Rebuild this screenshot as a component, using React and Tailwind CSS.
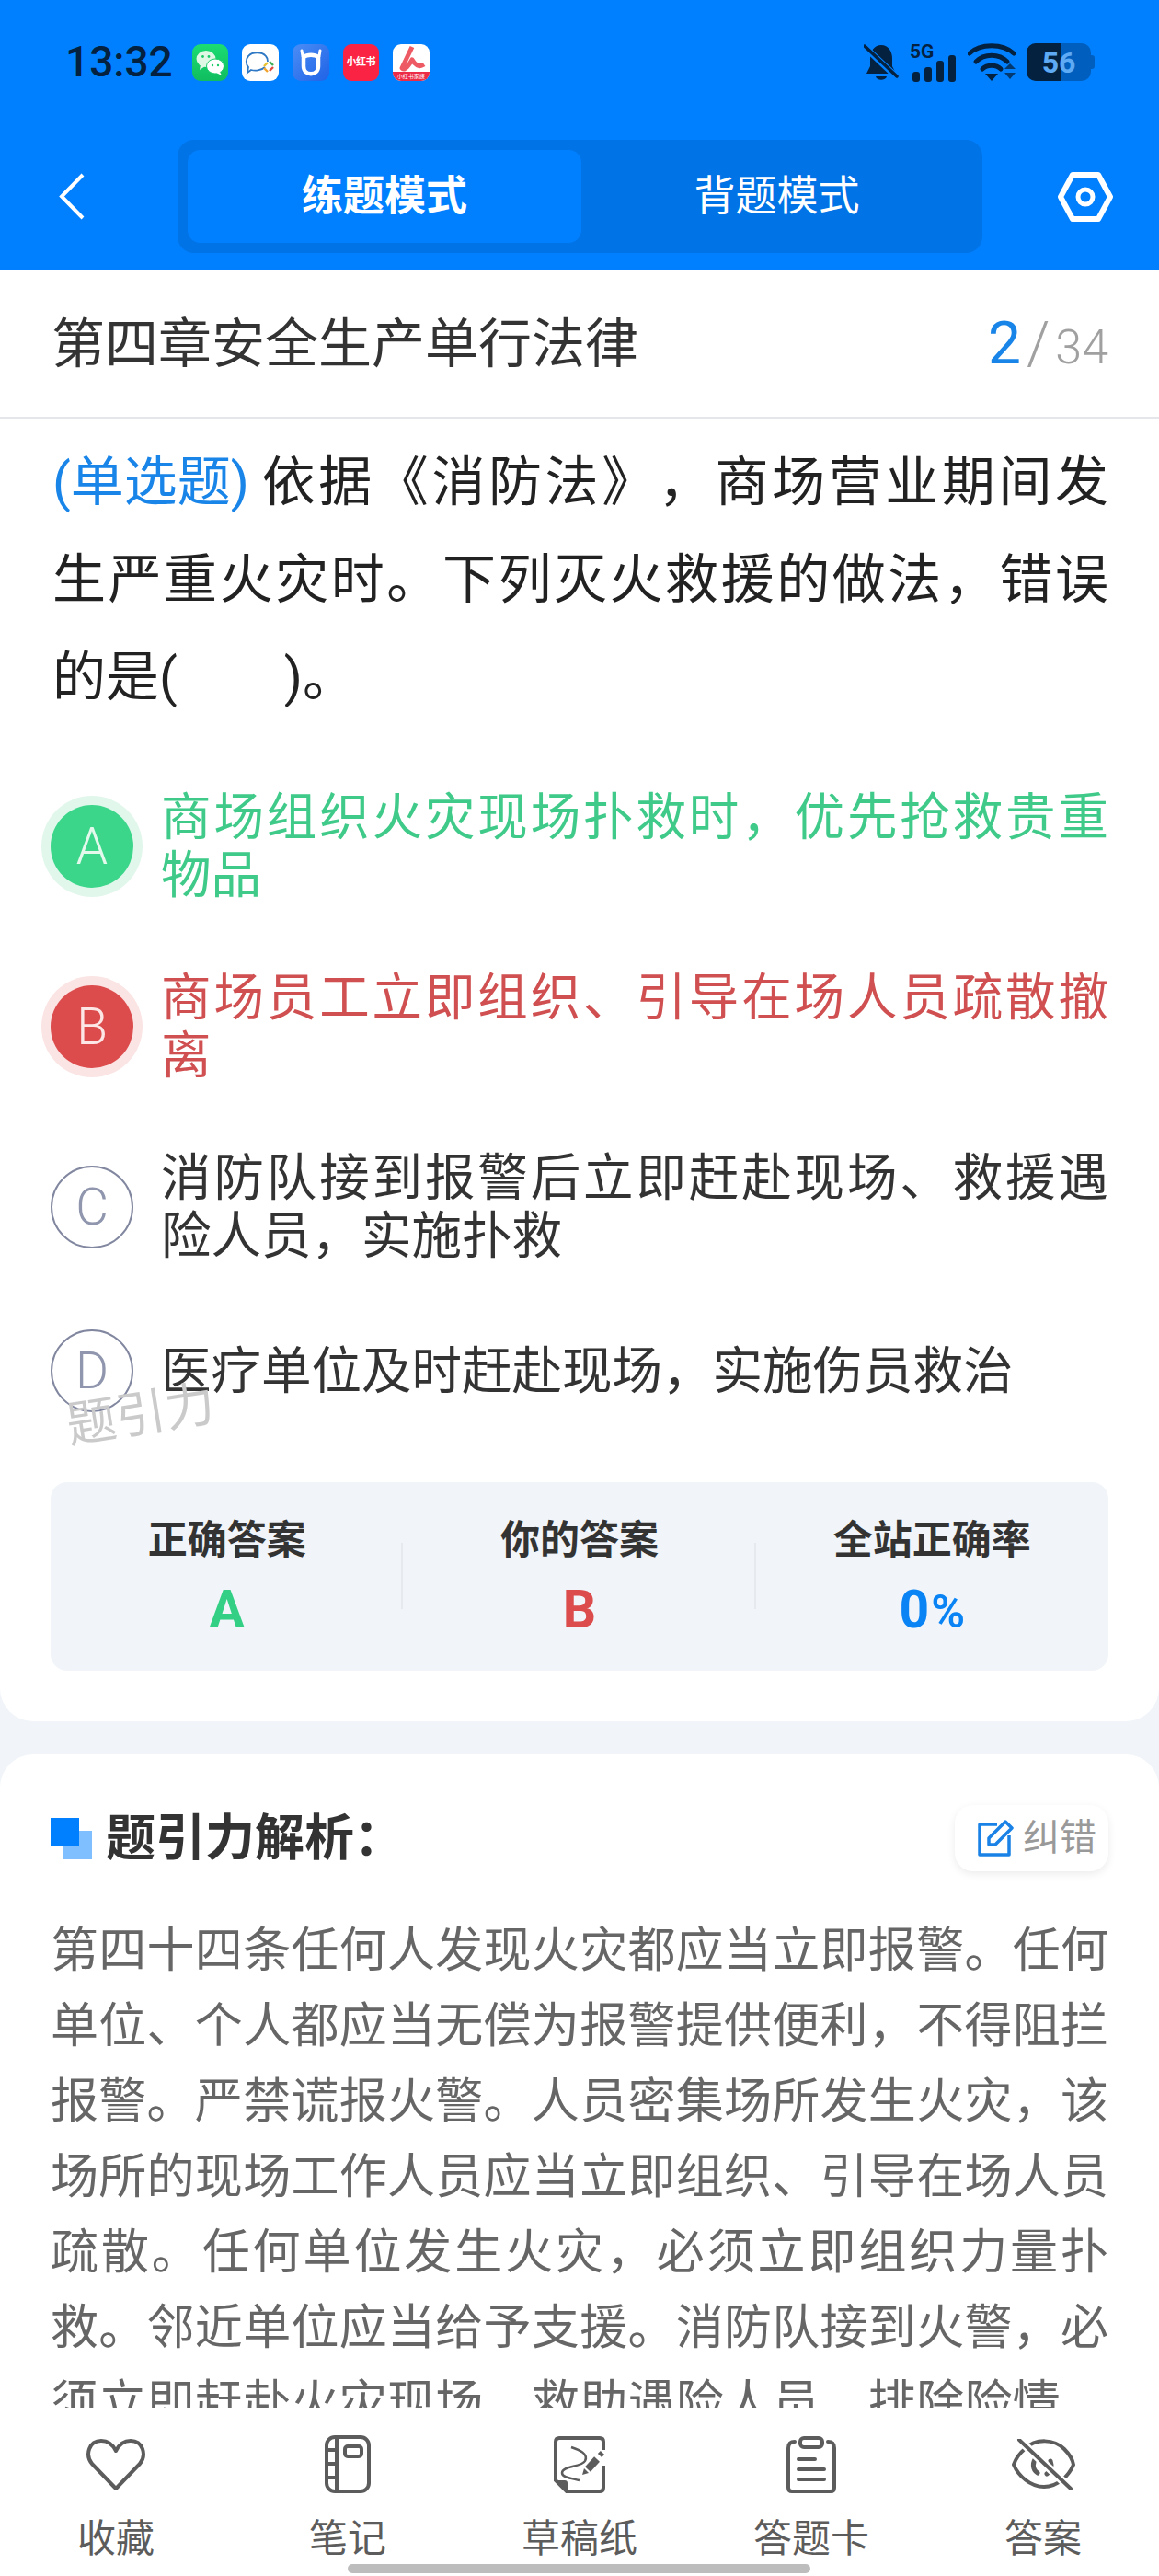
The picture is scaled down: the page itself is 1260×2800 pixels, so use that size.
const DARK = '#04213f'

function WeChatIcon() {
    return (
        <div className="w-[39px] h-[40px] rounded-[9px] bg-linear-to-b from-[#1bdc72] to-[#10bd5f] overflow-hidden">
            <svg viewBox="0 0 39 40" className="w-full h-full">
                <ellipse cx="15" cy="16" rx="10.5" ry="9" fill="#dff8e6" />
                <path d="M9 22 L8 28 L14 24 Z" fill="#dff8e6" />
                <ellipse cx="25" cy="24" rx="9.5" ry="8" fill="#fff" stroke="#1ccb6a" strokeWidth="1" />
                <path d="M30 30 L32 34 L26 31 Z" fill="#fff" />
                <circle cx="11.5" cy="13.5" r="1.4" fill="#1ccb6a" />
                <circle cx="18" cy="13.5" r="1.4" fill="#1ccb6a" />
                <circle cx="22" cy="23" r="1.2" fill="#1ccb6a" />
                <circle cx="28" cy="23" r="1.2" fill="#1ccb6a" />
            </svg>
        </div>
    )
}

function ChatIcon() {
    return (
        <div className="w-[40px] h-[40px] rounded-[9px] bg-white overflow-hidden">
            <svg viewBox="0 0 40 40" className="w-full h-full" fill="none">
                <path d="M25 25 C21 29 14 29 10 28 L6 31 L7 25 C4 22 4 16 7 13 C11 8 22 8 26 13 C28 15 28 18 28 19" stroke="#2f78c4" strokeWidth="1.8" />
                <path d="M30 19 L34 23" stroke="#3fae5a" strokeWidth="2.4" />
                <path d="M34 25 L30 29" stroke="#e0483f" strokeWidth="2.4" />
                <path d="M28 30 L24 26" stroke="#f0a32c" strokeWidth="2.4" />
                <path d="M24 24 L28 20" stroke="#e9c12f" strokeWidth="2.4" />
            </svg>
        </div>
    )
}

function CowIcon() {
    return (
        <div className="w-[40px] h-[40px] rounded-[9px] bg-linear-to-br from-[#4b8df5] to-[#1f62e6] overflow-hidden">
            <svg viewBox="0 0 40 40" className="w-full h-full" fill="none">
                <path d="M12 14 V24 C12 35 28 35 28 24 V14 C24 11 16 11 12 14 Z" stroke="#fff" strokeWidth="4.5" />
                <path d="M10 7 L11 13 M30 7 L29 13" stroke="#fff" strokeWidth="3" strokeLinecap="round" />
            </svg>
        </div>
    )
}

function RedBookIcon() {
    return (
        <div className="w-[39px] h-[40px] rounded-[9px] bg-[#fb2343] flex items-center justify-center text-white text-[11px] font-bold leading-none tracking-[-0.5px]">
            小红书
        </div>
    )
}

function FamilyIcon() {
    return (
        <div className="relative w-[40px] h-[40px] rounded-[9px] bg-white overflow-hidden">
            <svg viewBox="0 0 40 40" className="w-full h-full" fill="none">
                <path d="M21 3 L10 26 C13 30 18 22 21 17 C24 22 28 26 34 22" stroke="#ee5a63" strokeWidth="5" strokeLinejoin="round" />
            </svg>
            <div className="absolute left-0 right-0 bottom-0 h-[10px] bg-[#ec2c46] text-[6px] leading-[10px] text-white text-center whitespace-nowrap">小红书家族</div>
        </div>
    )
}

function StatusIcons() {
    return (
        <div className="flex items-center gap-[12px] h-[41px]">
            <svg viewBox="0 0 38 41" className="w-[38px] h-[41px]">
                <path d="M19 2 C27 2 31 9 31 17 V25 L35 33 H3 L7 25 V17 C7 9 11 2 19 2 Z" fill={DARK} />
                <path d="M13 36 H25 C24 41 14 41 13 36 Z" fill={DARK} />
                <path d="M1 4 L36 37" stroke="#0080ff" strokeWidth="7" />
                <path d="M1 3 L36 36" stroke={DARK} strokeWidth="3.5" strokeLinecap="round" />
            </svg>
            <div className="relative w-[51px] h-[41px]">
                <span className="absolute left-0 top-[-2px] text-[21px] leading-[22px] font-bold text-[#04213f]">5G</span>
                <div className="absolute left-[3px] bottom-[-1px] flex items-end gap-[5px]">
                    <div className="w-[8px] h-[11px] rounded-[3px] bg-[#04213f]" />
                    <div className="w-[8px] h-[16px] rounded-[3px] bg-[#04213f]" />
                    <div className="w-[8px] h-[23px] rounded-[3px] bg-[#04213f]" />
                    <div className="w-[8px] h-[29px] rounded-[3px] bg-[#04213f]" />
                </div>
            </div>
            <svg viewBox="0 0 52 41" className="w-[52px] h-[41px]" fill="none">
                <path d="M2 11 C14 0 38 0 50 11" stroke={DARK} strokeWidth="5" strokeLinecap="round" />
                <path d="M9 20 C18 11 34 11 43 20" stroke={DARK} strokeWidth="5" strokeLinecap="round" />
                <path d="M16 28 C21 23 31 23 36 28" stroke={DARK} strokeWidth="5" strokeLinecap="round" />
                <path d="M19 33 H33 L26 41 Z" fill={DARK} />
                <path d="M40 28 L46 22 L52 28 Z" fill={DARK} opacity="0.75" />
                <path d="M40 32 H52 L46 39 Z" fill={DARK} opacity="0.75" />
            </svg>
            <div className="relative w-[74px] h-[41px]">
                <div className="absolute left-0 top-0 w-[70px] h-[41px] rounded-[10px] bg-[#005fbe] overflow-hidden">
                    <div className="w-[38px] h-full bg-[#04213f]" />
                </div>
                <div className="absolute right-0 top-[13px] w-[4px] h-[15px] rounded-r-[3px] bg-[#005fbe]" />
                <div className="absolute left-0 top-0 w-[70px] h-[41px] flex items-center justify-center text-[32px] font-bold text-[#5eaaf5] leading-none">56</div>
            </div>
        </div>
    )
}

function Header() {
    return (
        <div className="bg-[#0080ff] h-[294px] shrink-0">
            <div className="flex items-center justify-between pt-[47px] pl-[71px] pr-[70px]">
                <div className="flex items-center gap-[21px]">
                    <span className="text-[46px] leading-[41px] font-medium text-[#04213f]">13:32</span>
                    <div className="flex items-center gap-[15px]">
                        <WeChatIcon />
                        <ChatIcon />
                        <CowIcon />
                        <RedBookIcon />
                        <FamilyIcon />
                    </div>
                </div>
                <StatusIcons />
            </div>
            <div className="flex items-center mt-[64px] pl-[64px]">
                <svg viewBox="0 0 28 51" className="w-[28px] h-[51px]" fill="none">
                    <path d="M26 2 L3 25.5 L26 49" stroke="#fff" strokeWidth="4" />
                </svg>
                <div className="ml-[101px] w-[875px] h-[123px] p-[11px] rounded-[18px] bg-[#0073e6] flex">
                    <div className="w-[428px] rounded-[14px] bg-[#0080ff] flex items-center justify-center text-white text-[45px] font-bold">练题模式</div>
                    <div className="flex-1 flex items-center justify-center text-white text-[45px]">背题模式</div>
                </div>
                <svg viewBox="0 0 60 54" className="ml-[82px] w-[60px] h-[54px]" fill="none">
                    <path d="M3 27 L16 3 H44 L57 27 L44 51 H16 Z" stroke="#fff" strokeWidth="6" strokeLinejoin="round" />
                    <circle cx="30" cy="27" r="8" stroke="#fff" strokeWidth="5" />
                </svg>
            </div>
        </div>
    )
}

function Option({ letter, text, variant }) {
    const circleClass = {
        right: 'bg-[#3cd68b] text-[#e2f9ec] shadow-[0_0_0_10px_#e2f7ec]',
        wrong: 'bg-[#dc4c4c] text-[#fde6e6] shadow-[0_0_0_10px_#fbe4e4]',
        none: 'border-2 border-[#8287a0] text-[#8f96ad]',
    }[variant]
    const textClass = {
        right: 'text-[#3fca89]',
        wrong: 'text-[#d04f50]',
        none: 'text-[#333333]',
    }[variant]

    return (
        <div className="flex items-center">
            <div className={`w-[90px] h-[90px] shrink-0 rounded-full flex items-center justify-center text-[55px] font-light ${circleClass}`}>
                {letter}
            </div>
            <div className={`ml-[30px] flex-1 text-[54.5px] leading-[63px] text-justify [text-spacing-trim:space-all] ${textClass}`}>{text}</div>
        </div>
    )
}

function Stat({ label, children, divider }) {
    return (
        <div className="relative flex-1 flex flex-col items-center pt-[38px]">
            <div className="text-[43px] leading-[50px] font-bold text-[#333333]">{label}</div>
            <div className="mt-[20px] h-[62px] leading-[62px] flex items-baseline font-bold">{children}</div>
            {divider && <div className="absolute right-0 top-[66px] w-[2px] h-[72px] bg-[#e6eaee]" />}
        </div>
    )
}

function QuestionCard() {
    return (
        <div className="bg-white rounded-b-[36px] px-[55px] pb-[55px]">
            <div className="-mx-[55px] h-[159px] pl-[56px] pr-[55px] flex items-center justify-between border-b-2 border-[#e4e6e9] box-content">
                <div className="mt-[2px] text-[58px] text-[#333333]">第四章安全生产单行法律</div>
                <div className="flex items-baseline text-[#a0a0a0]">
                    <span className="text-[64px] text-[#1a85e8]">2</span>
                    <span className="ml-[6px] text-[64px] font-light">/</span>
                    <span className="ml-[6px] text-[52px] font-light">34</span>
                </div>
            </div>
            <div className="mt-[16px] ml-[2px] text-[58px] leading-[106px] text-[#222222] text-justify [text-spacing-trim:space-all]">
                <span className="inline-block mr-[10px] text-[#1a85e8]">(单选题)</span>依据《消防法》，商场营业期间发生严重火灾时。下列灭火救援的做法，错误的是(　　)。
            </div>
            <div className="mt-[68px] flex flex-col gap-[70px]">
                <Option letter="A" variant="right" text="商场组织火灾现场扑救时，优先抢救贵重物品" />
                <Option letter="B" variant="wrong" text="商场员工立即组织、引导在场人员疏散撤离" />
                <Option letter="C" variant="none" text="消防队接到报警后立即赶赴现场、救援遇险人员，实施扑救" />
                <Option letter="D" variant="none" text="医疗单位及时赶赴现场，实施伤员救治" />
            </div>
            <div className="mt-[76px] h-[205px] rounded-[18px] bg-[#f1f5f9] flex">
                <Stat label="正确答案" divider>
                    <span className="text-[57px] text-[#33cf85]">A</span>
                </Stat>
                <Stat label="你的答案" divider>
                    <span className="text-[57px] text-[#dc4c4c]">B</span>
                </Stat>
                <Stat label="全站正确率">
                    <span className="text-[57px] text-[#0a84f5]">0</span>
                    <span className="ml-[2px] text-[50px] font-semibold text-[#0a84f5]">%</span>
                </Stat>
            </div>
        </div>
    )
}

function AnalysisCard() {
    return (
        <div className="mt-[36px] bg-white rounded-t-[36px] px-[55px] pt-[55px]">
            <div className="flex items-center justify-between h-[72px]">
                <div className="flex items-center">
                    <div className="relative w-[45px] h-[45px]">
                        <div className="absolute right-0 bottom-0 w-[31px] h-[31px] bg-[#7fbfff]" />
                        <div className="absolute left-0 top-0 w-[31px] h-[31px] bg-[#0080ff]" />
                    </div>
                    <div className="ml-[15px] text-[54px] font-bold text-[#333333]">题引力解析：</div>
                </div>
                <div className="w-[167px] h-[72px] rounded-[20px] bg-white shadow-[0_3px_10px_rgba(0,0,0,0.08)] flex items-center pl-[25px]">
                    <svg viewBox="0 0 40 40" className="w-[40px] h-[40px]" fill="none">
                        <path d="M21 5 H2 V38 H34 V17" stroke="#1a82e6" strokeWidth="3.5" strokeLinejoin="round" />
                        <path d="M12 20 L30 2 L37 9 L19 27 H12 Z" stroke="#1a82e6" strokeWidth="3.5" strokeLinejoin="round" />
                    </svg>
                    <span className="ml-[9px] text-[40px] text-[#999999]">纠错</span>
                </div>
            </div>
            <div className="mt-[46px] text-[52px] leading-[82px] text-[#666666] text-justify [text-spacing-trim:space-all]">
                第四十四条任何人发现火灾都应当立即报警。任何单位、个人都应当无偿为报警提供便利，不得阻拦报警。严禁谎报火警。人员密集场所发生火灾，该场所的现场工作人员应当立即组织、引导在场人员疏散。任何单位发生火灾，必须立即组织力量扑救。邻近单位应当给予支援。消防队接到火警，必须立即赶赴火灾现场，救助遇险人员，排除险情，扑灭火灾。
            </div>
        </div>
    )
}

function NavItem({ label, children }) {
    return (
        <div className="flex-1 flex flex-col items-center">
            <div className="h-[63px] flex items-center justify-center">{children}</div>
            <div className="mt-[25px] text-[42px] leading-[50px] text-[#5c5c5c]">{label}</div>
        </div>
    )
}

function BottomBar() {
    return (
        <div className="h-[183px] shrink-0 bg-white flex pt-[30px]">
            <NavItem label="收藏">
                <svg viewBox="0 0 66 58" className="w-[66px] h-[58px]" fill="none" stroke="#5c5c5c" strokeWidth="4" strokeLinejoin="round">
                    <path d="M33 55 L7 28 C-1 18 4 3 17 3 C25 3 30 8 33 14 C36 8 41 3 49 3 C62 3 67 18 59 28 Z" />
                </svg>
            </NavItem>
            <NavItem label="笔记">
                <svg viewBox="0 0 50 63" className="w-[50px] h-[63px]" fill="none" stroke="#5c5c5c" strokeWidth="4">
                    <rect x="2" y="2" width="46" height="59" rx="9" />
                    <path d="M13 2 V61 M2 16 H13 M2 31 H13 M2 46 H13" />
                    <rect x="22" y="12" width="18" height="11" rx="3" />
                </svg>
            </NavItem>
            <NavItem label="草稿纸">
                <svg viewBox="0 0 56 62" className="w-[56px] h-[62px]" fill="none" stroke="#5c5c5c" strokeWidth="4">
                    <path d="M54 15 V6 Q54 2 50 2 H6 Q2 2 2 6 V48 L14 60 H50 Q54 60 54 56 V32" />
                    <path d="M3 48 H12 Q15 48 15 51 V59 Z" fill="#5c5c5c" stroke="none" />
                    <path d="M19 12 C28 15 38 19 34 27 C30 34 9 32 9 40 C9 45 20 46 28 48" strokeWidth="2.5" />
                    <path d="M37 36 L47 25" strokeWidth="8" />
                    <path d="M50 21 L53 18" strokeWidth="6" />
                    <path d="M31 42 L33 35 L38 40 Z" fill="#5c5c5c" stroke="none" />
                </svg>
            </NavItem>
            <NavItem label="答题卡">
                <svg viewBox="0 0 54 62" className="w-[54px] h-[62px]" fill="none" stroke="#5c5c5c" strokeWidth="4" strokeLinecap="round">
                    <rect x="15" y="2" width="24" height="10" rx="4" />
                    <path d="M9 6 Q2 6 2 13 V56 Q2 60 6 60 H48 Q52 60 52 56 V13 Q52 6 45 6" />
                    <path d="M13 25 H31 M13 36 H41 M13 47 H41" />
                </svg>
            </NavItem>
            <NavItem label="答案">
                <svg viewBox="0 0 69 55" className="w-[69px] h-[55px]" fill="none" stroke="#5c5c5c" strokeWidth="4" strokeLinecap="round">
                    <path d="M14 11 C26 -1 46 0 57 11 C62 16 66 22 67 28 C62 40 50 52 35 52 C20 52 7 40 2 28 C4 22 8 16 14 11 Z" />
                    <path d="M27 20 C22 25 22 33 28 37 M42 24 C44 29 43 35 38 38" strokeWidth="5" />
                    <path d="M8 1 L64 54" stroke="#ffffff" strokeWidth="9" strokeLinecap="butt" />
                    <path d="M8 1 L64 54" />
                </svg>
            </NavItem>
        </div>
    )
}

export default function App() {
    return (
        <div className="relative w-[1260px] h-[2800px] flex flex-col overflow-hidden bg-[#f1f5f9] font-['Roboto','Noto_Sans_CJK_SC',sans-serif]">
            <Header />
            <div className="flex-1 min-h-0 overflow-hidden">
                <QuestionCard />
                <AnalysisCard />
            </div>
            <BottomBar />
            {/* 水印 */}
            <div className="absolute left-[72px] top-[1508px] text-[54px] leading-[60px] text-[#cacaca] -rotate-[9deg]">题引力</div>
            <div className="absolute left-[378px] top-[2787px] w-[503px] h-[10px] rounded-full bg-[#bdbdbd]" />
        </div>
    )
}
